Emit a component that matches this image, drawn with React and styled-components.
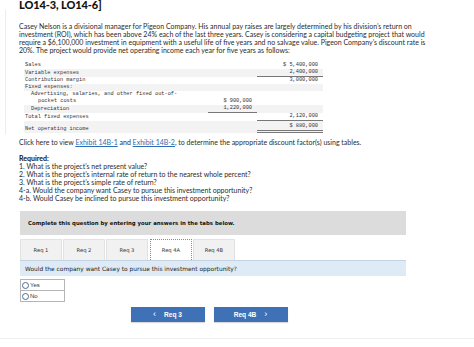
import React from "react";
import styled, { createGlobalStyle } from "styled-components";

const GlobalStyle = createGlobalStyle`
  html, body {
    margin: 0;
    padding: 0;
    background: #ffffff;
  }
  body {
    font-family: Lato, "Open Sans", sans-serif;
    color: #2b2b2b;
    overflow: hidden;
  }
`;

const introLines = [
  "Casey Nelson is a divisional manager for Pigeon Company. His annual pay raises are largely determined by his division’s return on",
  "investment (ROI), which has been above 24% each of the last three years. Casey is considering a capital budgeting project that would",
  "require a $6,100,000 investment in equipment with a useful life of five years and no salvage value. Pigeon Company’s discount rate is",
  "20%. The project would provide net operating income each year for five years as follows:",
];

const rows = [
  { label: "Sales", right: "$ 5,400,000" },
  { label: "Variable expenses", right: "2,400,000", rightLine: true },
  { label: "Contribution margin", right: "3,000,000" },
  { label: "Fixed expenses:" },
  {
    label: "Advertising, salaries, and other fixed out-of-",
    label2: "pocket costs",
    indent: 1,
    mid: "$ 900,000",
  },
  { label: "Depreciation", indent: 1, mid: "1,220,000", midLine: true },
  { label: "Total fixed expenses", right: "2,120,000", rightLine: true },
  { label: "Net operating income", right: "$ 880,000", net: true },
];

const tabs = ["Req 1", "Req 2", "Req 3", "Req 4A", "Req 4B"];

function App() {
  return (
    <Page>
      <GlobalStyle />
      <Title>LO14-3, LO14-6]</Title>
      <Frame>
        <Intro>
          {introLines.map((l) => (
            <span key={l}>{l}</span>
          ))}
        </Intro>
        <IncomeTable>
          {rows.map((r, i) => (
            <Row key={r.label} $shade={i % 2 === 1} $net={r.net}>
              <LabelCell $indent={r.indent}>
                {r.label}
                {r.label2 && <SubLine>{r.label2}</SubLine>}
              </LabelCell>
              <NumCell $line={r.midLine}>{r.mid}</NumCell>
              <NumCell $line={r.rightLine} $double={r.net}>
                {r.right}
              </NumCell>
            </Row>
          ))}
        </IncomeTable>
      </Frame>

      <Para>
        Click here to view <Link>Exhibit 14B-1</Link> and <Link>Exhibit 14B-2</Link>, to determine the
        appropriate discount factor(s) using tables.
      </Para>

      <Required>
        <strong>Required:</strong>
        <span>1. What is the project’s net present value?</span>
        <span>2. What is the project’s internal rate of return to the nearest whole percent?</span>
        <span>3. What is the project’s simple rate of return?</span>
        <span>4-a. Would the company want Casey to pursue this investment opportunity?</span>
        <span>4-b. Would Casey be inclined to pursue this investment opportunity?</span>
      </Required>

      <Panel>
        <PanelHead>Complete this question by entering your answers in the tabs below.</PanelHead>
        <TabRow>
          {tabs.map((t) => (
            <Tab key={t} $active={t === "Req 4A"}>
              {t}
            </Tab>
          ))}
        </TabRow>
        <Question>Would the company want Casey to pursue this investment opportunity?</Question>
        <Choices>
          <Choice>
            <Radio />
            Yes
          </Choice>
          <Choice>
            <Radio />
            No
          </Choice>
        </Choices>
        <NavRow>
          <NavButton>
            <Chevron>‹</Chevron>Req 3
          </NavButton>
          <NavButton>
            Req 4B<Chevron $right>›</Chevron>
          </NavButton>
        </NavRow>
      </Panel>
      <BottomRule />
    </Page>
  );
}

const Page = styled.div`
  width: 474px;
  height: 347px;
  padding-left: 5px;
  box-sizing: border-box;
  position: relative;
`;

const Title = styled.h2`
  margin: -3px 0 0 14px;
  font-family: Lato, sans-serif;
  font-size: 11px;
  font-weight: 900;
  line-height: 16px;
  letter-spacing: -0.1px;
  color: #111;
`;

const Frame = styled.div`
  border-left: 1px solid #ececec;
  padding: 12px 0 1px 13px;
  margin-top: -3px;
`;

const Intro = styled.p`
  margin: 0;
  display: flex;
  flex-direction: column;
  font-size: 7px;
  line-height: 8.1px;
  white-space: nowrap;
`;

const IncomeTable = styled.div`
  margin: 8px 0 0 5px;
  width: 299px;
  font-family: "Liberation Mono", "DejaVu Sans Mono", monospace;
  font-size: 5.3px;
  line-height: 7px;
  color: #333;
`;

const Row = styled.div`
  display: grid;
  grid-template-columns: 184px 49px 66px;
  align-items: end;
  padding-top: ${(p) => (p.$net ? "2px" : "0")};
  background: ${(p) => (p.$shade ? "#f3f3f3" : "transparent")};
`;

const LabelCell = styled.div`
  padding-left: ${(p) => (p.$indent ? 7 : 1)}px;
  white-space: nowrap;
`;

const SubLine = styled.span`
  display: block;
  padding-left: 7px;
`;

const NumCell = styled.div`
  text-align: right;
  padding-right: 5px;
  min-height: 7px;
  white-space: nowrap;
  border-bottom: ${(p) => (p.$double ? "3px double #777" : p.$line ? "1px solid #777" : "0")};
`;

const Para = styled.p`
  margin: 4px 0 0 14px;
  font-size: 7px;
  line-height: 8px;
`;

const Link = styled.a`
  color: #2d6db5;
  text-decoration: underline;
`;

const Required = styled.div`
  margin: 8px 0 0 14px;
  display: flex;
  flex-direction: column;
  font-size: 7px;
  line-height: 8px;
  strong {
    font-weight: 700;
    color: #111;
  }
`;

const Panel = styled.div`
  margin: 9px 0 0 15px;
  width: 386px;
  font-family: "DejaVu Sans", Verdana, sans-serif;
`;

const PanelHead = styled.div`
  background: #dcdcdc;
  height: 24px;
  display: flex;
  align-items: center;
  padding-left: 8px;
  font-size: 5.4px;
  font-weight: 700;
  color: #111;
`;

const TabRow = styled.div`
  display: flex;
  gap: 1px;
  margin-top: 4px;
`;

const Tab = styled.div`
  width: 42px;
  height: 21px;
  box-sizing: border-box;
  display: flex;
  align-items: center;
  justify-content: center;
  font-size: 5.2px;
  color: #333;
  background: ${(p) => (p.$active ? "#ffffff" : "#f1f1f1")};
  border: 1px ${(p) => (p.$active ? "dotted #8a8a8a" : "solid #e2e2e2")};
  border-bottom: 0;
  margin-left: ${(p) => (p.$active ? "1px" : "0")};
`;

const Question = styled.div`
  background: #deebf7;
  border-top: 1px solid #c4d3e2;
  height: 15px;
  display: flex;
  align-items: center;
  padding-left: 5px;
  font-size: 5.9px;
  color: #222;
`;

const Choices = styled.div`
  margin-top: 3px;
  width: 45px;
  border: 1px solid #b5b5b5;
  box-sizing: border-box;
`;

const Choice = styled.div`
  height: 10px;
  display: flex;
  align-items: center;
  font-family: "Liberation Sans", Arial, sans-serif;
  font-size: 6px;
  color: #333;
  & + & {
    border-top: 1px solid #b5b5b5;
  }
`;

const Radio = styled.span`
  width: 7px;
  height: 7px;
  border: 1px solid #4b6a9a;
  border-radius: 50%;
  box-sizing: border-box;
  margin: 0 1px;
`;

const NavRow = styled.div`
  display: flex;
  justify-content: center;
  gap: 9px;
  margin: 5px 0 0 -8px;
`;

const NavButton = styled.div`
  width: 74px;
  height: 15px;
  background: #3f71b7;
  color: #ffffff;
  display: flex;
  align-items: center;
  justify-content: center;
  font-family: "Liberation Sans", Arial, sans-serif;
  font-size: 6.6px;
  font-weight: 700;
  box-shadow: 0 1px 1px rgba(0, 0, 0, 0.15);
`;

const Chevron = styled.span`
  font-size: 9px;
  font-weight: 400;
  line-height: 1;
  margin: ${(p) => (p.$right ? "-1px 0 0 8px" : "-1px 8px 0 0")};
`;

const BottomRule = styled.div`
  position: absolute;
  left: 0;
  right: 0;
  top: 341px;
  border-top: 1px solid #efefef;
`;

export default App;
